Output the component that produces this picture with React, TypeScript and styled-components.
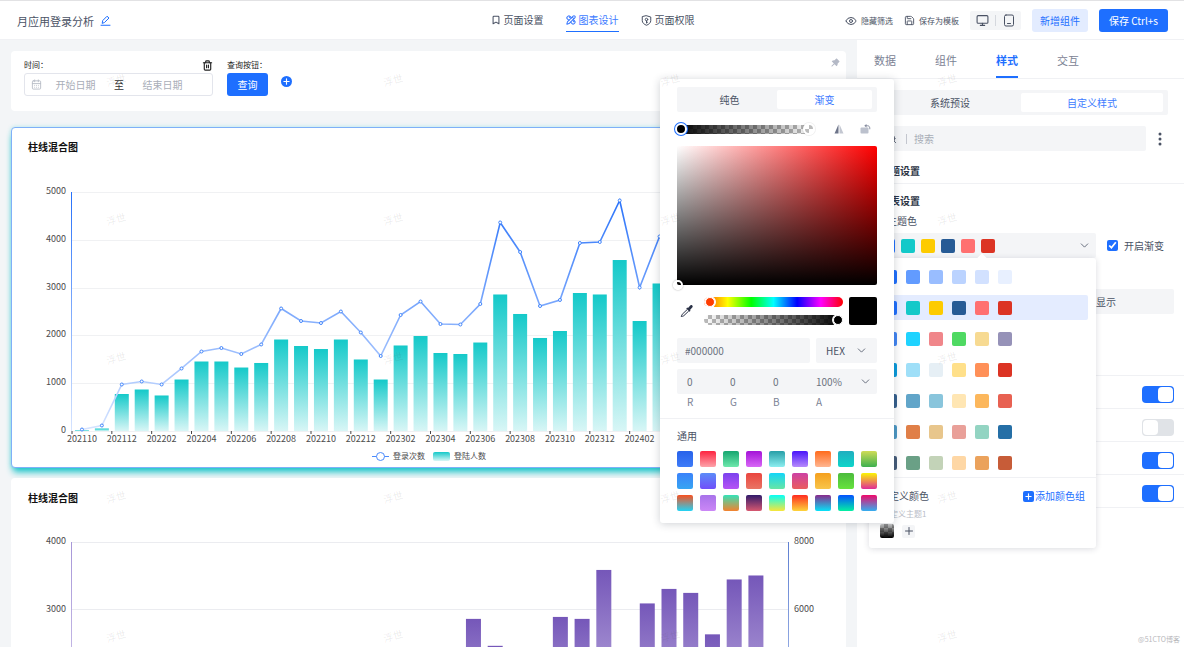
import React from "react";
import styled, { createGlobalStyle, css } from "styled-components";
import {
  Bookmark,
  CalendarDays,
  ChevronDown,
  Eye,
  Monitor,
  PencilRuler,
  Plus,
  Save,
  Search,
  Trash2,
} from "lucide-react";
import { AiFillPushpin } from "react-icons/ai";

const blue = "#1e6fff";
const ink = "#4a5264";
const soft = "#f4f5f7";
const line = "#f0f1f4";

const GlobalStyle = createGlobalStyle`
  * { box-sizing: border-box; }
  body {
    margin: 0;
    background: #f3f5f7;
    color: ${ink};
    font: 10px/16px "Noto Sans CJK SC", "Noto Sans", sans-serif;
  }
  button, input, select { font: inherit; color: inherit; }
  button { border: 0; padding: 0; background: none; cursor: pointer; }
  h1, h2, h3, p { margin: 0; font: inherit; }
  svg { display: block; flex: none; }
`;

const Page = styled.div`
  position: relative;
  display: flex;
  flex-direction: column;
  height: 100vh;
  overflow: hidden;
`;

/* ---------- header ---------- */
const Header = styled.header`
  display: grid;
  grid-template-columns: 1fr auto 1fr;
  align-items: center;
  height: 40px;
  flex: none;
  padding: 1px 16px 0 17px;
  background: #fff;
  border-top: 1px solid #e2e2e4;
  border-bottom: 1px solid ${line};
`;
const TitleBar = styled.div`
  display: flex;
  align-items: center;
  gap: 6px;
  font-size: 11px;
`;
const IconButton = styled.button<{ $color?: string }>`
  display: flex;
  align-items: center;
  justify-content: center;
  color: ${(p) => p.$color || ink};
`;
const Nav = styled.nav`
  display: flex;
  gap: 22px;
`;
const NavLink = styled.a<{ $active?: boolean }>`
  display: flex;
  align-items: center;
  gap: 3px;
  height: 22px;
  text-decoration: none;
  color: ${(p) => (p.$active ? "#3d7bff" : ink)};
  border-bottom: 1px solid ${(p) => (p.$active ? blue : "transparent")};
`;
const Actions = styled.div`
  display: flex;
  align-items: center;
  justify-content: flex-end;
  gap: 11px;
`;
const SmallAction = styled.button`
  display: flex;
  align-items: center;
  gap: 4px;
  font-size: 8px;
`;
const Devices = styled.div`
  display: flex;
  align-items: center;
  height: 19px;
  border-radius: 2px;
  background: ${soft};
  & > button { width: 25px; height: 19px; }
  & > span { width: 1px; height: 11px; background: #d5d8de; }
`;
const Button = styled.button<{ $primary?: boolean; $width: number }>`
  height: 23px;
  width: ${(p) => p.$width}px;
  border-radius: 3px;
  background: ${(p) => (p.$primary ? blue : "#e3ecff")};
  color: ${(p) => (p.$primary ? "#fff" : blue)};
`;

/* ---------- canvas ---------- */
const Body = styled.div`
  display: flex;
  flex: 1;
  min-height: 0;
`;
const Canvas = styled.main`
  flex: 1;
  min-width: 0;
  padding: 11px;
  overflow: hidden;
`;
const FilterCard = styled.section`
  display: flex;
  align-items: flex-start;
  height: 60px;
  margin-bottom: 16px;
  padding: 6px 5px 6px 13px;
  border-radius: 4px;
  background: #fff;
`;
const Field = styled.div`
  display: flex;
  flex-direction: column;
  margin-right: 14px;
`;
const FieldHead = styled.div`
  display: flex;
  align-items: center;
  justify-content: space-between;
  height: 16px;
  font-size: 8px;
  color: #222;
`;
const DateRange = styled.div`
  display: flex;
  align-items: center;
  width: 189px;
  height: 23px;
  padding-left: 6px;
  border: 1px solid #e3e5ec;
  border-radius: 3px;
  color: #b8bcc6;
  & > input {
    width: 67px;
    border: 0;
    padding: 0;
    background: none;
    text-align: center;
    outline: 0;
  }
  & > input::placeholder { color: #a9aeb8; }
  & > span { width: 20px; text-align: center; color: #333; }
`;
const AddFilter = styled.button`
  display: flex;
  align-items: center;
  justify-content: center;
  width: 11px;
  height: 11px;
  margin: 19px 0 0 -1px;
  border-radius: 50%;
  background: ${blue};
  color: #fff;
`;
const PinButton = styled(IconButton)`
  margin-left: auto;
`;
const ChartCard = styled.section<{ $active?: boolean }>`
  margin-bottom: 10px;
  border: 1px solid ${(p) => (p.$active ? "#7fb0f8" : "transparent")};
  border-radius: 4px;
  background: #fff;
  position: relative;
  ${(p) =>
    p.$active &&
    css`box-shadow: 0 6px 7px -2px #14c4c8, 0 0 4px rgba(20, 196, 200, 0.3);`}
  & > h2 {
    padding: 11px 16px 0;
    font-weight: 700;
    line-height: 16px;
    color: #111;
  }
  & > svg { width: 100%; height: auto; }
  & text { font-size: 9px; fill: #4c4c4c; }
  & text.legend { font-size: 8px; }
`;

/* ---------- sidebar ---------- */
const Sidebar = styled.aside`
  width: 327px;
  flex: none;
  background: #fff;
`;
const Tabs = styled.div`
  display: flex;
  gap: 39px;
  height: 39px;
  padding-left: 17px;
  border-bottom: 1px solid ${line};
`;
const Tab = styled.button<{ $active?: boolean }>`
  padding-top: 3px;
  font-size: 11px;
  color: ${(p) => (p.$active ? blue : "#7b8294")};
  font-weight: ${(p) => (p.$active ? 700 : 400)};
  border-bottom: 2px solid ${(p) => (p.$active ? blue : "transparent")};
`;
const Segmented = styled.div`
  display: grid;
  grid-template-columns: 1fr 1fr;
  height: 25px;
  padding: 3px 5px;
  border-radius: 2px;
  background: ${soft};
`;
const Segment = styled.button<{ $active?: boolean }>`
  border-radius: 2px;
  background: ${(p) => (p.$active ? "#fff" : "transparent")};
  color: ${(p) => (p.$active ? "#3d7bff" : ink)};
`;
const PanelTop = styled.div`
  display: flex;
  flex-direction: column;
  gap: 11px;
  padding: 11px 16px 0 17px;
`;
const SearchRow = styled.div`
  display: flex;
  align-items: center;
  justify-content: space-between;
  padding-right: 6px;
`;
const SearchBox = styled.label`
  display: flex;
  align-items: center;
  width: 272px;
  height: 25px;
  padding-left: 13px;
  border-radius: 2px;
  background: ${soft};
  & > input {
    flex: 1;
    min-width: 0;
    margin-left: 9px;
    padding: 0 0 0 7px;
    height: 10px;
    border: 0;
    border-left: 1px solid #c3c6ce;
    background: none;
    outline: 0;
  }
  & > input::placeholder { color: #a9aeb8; }
`;
const Section = styled.section<{ $first?: boolean }>`
  padding: ${(p) => (p.$first ? "12px 10px 4px 23px" : "9px 10px 0 23px")};
  ${(p) => p.$first && css`border-bottom: 1px solid ${line};`}
  & > h3 { font-weight: 700; color: #2c3444; }
  & > p { margin: 4px 0 4px 7px; }
`;
const ThemeRow = styled.div`
  display: flex;
  align-items: center;
  gap: 11px;
  margin-left: -6px;
`;
const ThemeSelect = styled.button`
  display: flex;
  align-items: center;
  gap: 6px;
  width: 222px;
  height: 25px;
  padding: 0 5px 0 7px;
  border-radius: 2px;
  background: ${soft};
  & > svg { margin-left: auto; }
`;
const Swatch = styled.span<{ $fill: string; $size?: number }>`
  display: block;
  flex: none;
  width: ${(p) => p.$size || 14}px;
  height: ${(p) => p.$size || 14}px;
  border-radius: 2px;
  background: ${(p) => p.$fill};
`;
const CheckLabel = styled.label`
  display: flex;
  align-items: center;
  gap: 6px;
  & > input {
    width: 11px;
    height: 11px;
    margin: 0;
    accent-color: ${blue};
  }
`;
const DisplaySelect = styled.select`
  display: block;
  width: 90px;
  height: 25px;
  margin: 31px 0 61px auto;
  padding: 0 12px;
  border: 0;
  border-radius: 2px;
  background: ${soft};
  appearance: none;
`;
const SwitchRow = styled.label`
  display: flex;
  align-items: center;
  justify-content: flex-end;
  height: 33px;
  padding: 4px 10px 0 0;
  border-top: 1px solid ${line};
`;
const SwitchList = styled.div`
  border-bottom: 1px solid ${line};
`;
const Switch = styled.input`
  display: flex;
  appearance: none;
  width: 32px;
  height: 17px;
  margin: 0;
  padding: 1px;
  border-radius: 4px;
  background: #e0e3e7;
  &::before {
    content: "";
    width: 15px;
    height: 15px;
    border-radius: 4px;
    background: #fff;
  }
  &:checked { background: ${blue}; justify-content: flex-end; }
`;

/* ---------- colour scheme menu ---------- */
const Menu = styled.div`
  position: absolute;
  top: 258px;
  right: 88px;
  width: 227px;
  padding: 6px 8px 10px;
  border-radius: 3px;
  background: #fff;
  box-shadow: 0 1px 6px rgba(30, 40, 60, 0.16);
`;
const MenuArrow = styled.i`
  position: absolute;
  top: -3px;
  right: 110px;
  width: 8px;
  height: 8px;
  background: #fff;
  transform: rotate(45deg);
`;
const SchemeList = styled.div`
  display: grid;
  gap: 6px;
  padding-bottom: 2px;
`;
const Scheme = styled.button<{ $active?: boolean }>`
  display: flex;
  align-items: center;
  gap: 9px;
  height: 25px;
  padding-left: 6px;
  border-radius: 2px;
  background: ${(p) => (p.$active ? "#e4ecff" : "transparent")};
`;
const CustomBlock = styled.div`
  margin: 0 -8px;
  padding: 10px 11px 0 10px;
  border-top: 1px solid ${line};
`;
const CustomHead = styled.div`
  display: flex;
  align-items: center;
  justify-content: space-between;
`;
const AddGroup = styled.button`
  display: flex;
  align-items: center;
  gap: 1px;
  color: ${blue};
  & > span {
    display: flex;
    align-items: center;
    justify-content: center;
    width: 11px;
    height: 11px;
    border-radius: 2px;
    background: ${blue};
    color: #fff;
  }
`;
const CustomName = styled.p`
  margin: 2px 0;
  padding-left: 3px;
  font-size: 8px;
  color: #b9bdc7;
`;
const CustomColors = styled.div`
  display: flex;
  align-items: center;
  gap: 8px;
  padding-left: 1px;
  & > button {
    display: flex;
    align-items: center;
    justify-content: center;
    width: 13px;
    height: 13px;
    border-radius: 2px;
    background: ${soft};
  }
`;

/* ---------- colour picker ---------- */
const Picker = styled.div`
  position: absolute;
  top: 79px;
  right: 290px;
  width: 234px;
  border-radius: 3px;
  background: #fff;
  box-shadow: 0 1px 8px rgba(30, 40, 60, 0.22);
`;
const PickerMain = styled.div`
  padding: 8px 17px;
  border-bottom: 1px solid ${line};
`;
const checker = "repeating-conic-gradient(#bbb 0 25%, #fff 0 50%) 0 0 / 8px 8px";
const StopRow = styled.div`
  display: flex;
  align-items: center;
  justify-content: space-between;
  height: 34px;
  padding-right: 6px;
`;
const StopTrack = styled.div`
  display: flex;
  align-items: center;
  justify-content: space-between;
  width: 136px;
  height: 9px;
  margin-right: 5px;
  border-radius: 5px;
  background: linear-gradient(90deg, #000, rgba(0, 0, 0, 0)), ${checker};
`;
const Stop = styled.button<{ $active?: boolean }>`
  width: 12px;
  height: 12px;
  margin: 0 -2px;
  border-radius: 50%;
  border: 2px solid #fff;
  background: ${(p) => (p.$active ? "#000" : checker)};
  box-shadow: 0 0 0 1px ${(p) => (p.$active ? blue : "rgba(0, 0, 0, 0.06)")};
`;
const Saturation = styled.div`
  display: flex;
  align-items: flex-end;
  height: 139px;
  border-radius: 2px;
  background: linear-gradient(0deg, #000, rgba(0, 0, 0, 0)),
    linear-gradient(90deg, #fff, #f00);
`;
const SaturationHandle = styled.button`
  width: 10px;
  height: 10px;
  margin: 0 0 -5px -4px;
  border: 2px solid #fff;
  border-radius: 50%;
  box-shadow: 0 0 2px rgba(0, 0, 0, 0.4);
`;
const SliderRow = styled.div`
  display: flex;
  align-items: center;
  gap: 6px;
  padding: 12px 0 13px 3px;
`;
const Sliders = styled.div`
  display: flex;
  flex-direction: column;
  justify-content: space-between;
  flex: 1;
  height: 28px;
  margin-left: 4px;
`;
const Slider = styled.input<{ $track: string; $thumb: string }>`
  appearance: none;
  width: 100%;
  height: 10px;
  margin: 0;
  border-radius: 5px;
  background: ${(p) => p.$track};
  &::-webkit-slider-thumb {
    appearance: none;
    width: 10px;
    height: 10px;
    border: 1px solid #fff;
    border-radius: 50%;
    background: ${(p) => p.$thumb};
    box-shadow: 0 0 0 1px #fff;
  }
`;
const HexRow = styled.div`
  display: flex;
  gap: 6px;
  margin-bottom: 6px;
`;
const HexInput = styled.input`
  flex: 1;
  min-width: 0;
  height: 25px;
  padding: 0 8px;
  border: 0;
  border-radius: 2px;
  background: ${soft};
  color: #6b7280;
`;
const SelectWrap = styled.label`
  display: grid;
  align-items: center;
  width: 61px;
  border-radius: 2px;
  background: ${soft};
  & > select, & > svg { grid-area: 1 / 1; }
  & > select {
    width: 100%;
    height: 25px;
    padding: 0 10px;
    border: 0;
    background: none;
    appearance: none;
  }
  & > svg { justify-self: end; margin-right: 9px; pointer-events: none; }
`;
const ChannelBox = styled.div`
  display: flex;
  align-items: center;
  height: 25px;
  padding: 0 7px 0 10px;
  border-radius: 2px;
  background: ${soft};
  color: #6b7280;
  & > input {
    width: 43px;
    padding: 0;
    border: 0;
    background: none;
  }
  & > svg { margin-left: auto; color: ${ink}; }
`;
const ChannelNames = styled.div`
  display: flex;
  padding-left: 10px;
  color: #7b8294;
  & > label { width: 43px; }
`;
const Presets = styled.div`
  padding: 9px 17px 12px;
`;
const PresetGrid = styled.div`
  display: grid;
  grid-template-columns: repeat(9, 16px);
  justify-content: space-between;
  row-gap: 6px;
  margin-top: 7px;
`;
const Preset = styled.button<{ $from: string; $to: string }>`
  height: 16px;
  border-radius: 2px;
  background: linear-gradient(${(p) => p.$from}, ${(p) => p.$to});
`;

/* ---------- watermarks ---------- */
const Watermarks = styled.div`
  position: absolute;
  inset: 10px 0 0 -23px;
  display: grid;
  grid-template-columns: repeat(auto-fill, 277px);
  grid-auto-rows: 139px;
  place-items: center;
  overflow: hidden;
  pointer-events: none;
  color: rgba(60, 60, 60, 0.1);
  & > span { transform: rotate(-15deg); }
`;
const Credit = styled.small`
  position: absolute;
  right: 4px;
  bottom: 0;
  font-size: 7px;
  color: #b8b8bc;
`;

const BARS = [
  20, 52, 774, 868, 743, 1077, 1454, 1454, 1328, 1423, 1914, 1778, 1715, 1914, 1496, 1077, 1789, 1987,
  1632, 1611, 1851, 2856, 2448, 1946, 2092, 2887, 2856, 3577, 2301, 3086, 2900, 2750, 2600, 2810, 3020, 2700,
];
const LINE = [
  31, 115, 973, 1036, 973, 1308, 1663, 1736, 1611, 1810, 2563, 2301, 2259, 2500, 2061, 1569, 2427, 2709,
  2238, 2228, 2657, 4362, 3745, 2615, 2741, 3933, 3954, 4822, 3002, 4069, 3900, 3700, 3500, 3820, 4100, 3600,
];
const BARS2 = [
  300, 420, 610, 700, 820, 900, 1010, 1200, 1150, 1300, 1500, 1420, 1610, 1700, 1800, 1650, 1900, 2100,
  2861, 2462, 2200, 2300, 2890, 2861, 3586, 2350, 3090, 3305, 3246, 2632, 3445, 3504, 2200,
];

const LEFT = 60;
const RIGHT = 777;
const TOP = 37;
const BOTTOM = 276;

const monthLabel = (i: number) => {
  const m = 9 + i;
  return `${2021 + Math.floor(m / 12)}${String((m % 12) + 1).padStart(2, "0")}`;
};

function LoginChart() {
  const step = (RIGHT - LEFT) / BARS.length;
  const x = (i: number) => LEFT + step * (i + 0.5);
  const y = (v: number) => BOTTOM - (v / 5000) * (BOTTOM - TOP);
  return (
    <svg viewBox="0 0 833 312" role="img" aria-label="柱线混合图">
      <defs>
        <linearGradient id="teal" x1="0" y1="0" x2="0" y2="1">
          <stop offset="0" stopColor="#14c9c9" />
          <stop offset="1" stopColor="#d8f6f6" />
        </linearGradient>
        <linearGradient id="blueLine" gradientUnits="userSpaceOnUse" x1="0" y1={TOP} x2="0" y2={BOTTOM}>
          <stop offset="0" stopColor="#2670fa" />
          <stop offset="1" stopColor="#d6e4ff" />
        </linearGradient>
      </defs>
      {[0, 1000, 2000, 3000, 4000, 5000].map((v) => (
        <g key={v}>
          <line x1={LEFT} x2={RIGHT} y1={Math.round(y(v)) + 0.5} y2={Math.round(y(v)) + 0.5} stroke="#f0f1f3" />
          <text x={LEFT - 6} y={y(v) + 2} textAnchor="end">{v}</text>
        </g>
      ))}
      <rect x={LEFT - 1} y={TOP} width="1" height={BOTTOM - TOP} fill="url(#blueLine)" />
      {BARS.map((v, i) => (
        <rect key={i} x={x(i) - 7} y={y(v)} width="14" height={BOTTOM - y(v)} fill="url(#teal)" />
      ))}
      {BARS.map((_, i) =>
        i % 2 === 0 ? (
          <g key={i}>
            <line x1={LEFT + step * i} x2={LEFT + step * i} y1={BOTTOM} y2={BOTTOM + 3} stroke="#444" />
            <text x={x(i)} y={BOTTOM + 11} textAnchor="middle">{monthLabel(i)}</text>
          </g>
        ) : null
      )}
      <polyline points={LINE.map((v, i) => `${x(i)},${y(v)}`).join(" ")} fill="none" stroke="url(#blueLine)" strokeWidth="1.6" />
      {LINE.map((v, i) => (
        <circle key={i} cx={x(i)} cy={y(v)} r="1.5" fill="#fff" stroke="#4285fb" />
      ))}
      <line x1="360" x2="377" y1="301.5" y2="301.5" stroke="#4c8bfb" />
      <circle cx="368.5" cy="301.5" r="4" fill="#fff" stroke="#4c8bfb" />
      <text className="legend" x="381" y="304">登录次数</text>
      <rect x="421" y="297" width="17" height="9" rx="2" fill="url(#teal)" />
      <text className="legend" x="442" y="304">登陆人数</text>
    </svg>
  );
}

function VisitChart() {
  const step = (RIGHT - LEFT) / BARS2.length;
  const top = 36;
  const bottom = 306;
  const y = (v: number) => bottom - (v / 4000) * (bottom - top);
  return (
    <svg viewBox="0 0 833 340" role="img" aria-label="柱线混合图">
      <defs>
        <linearGradient id="purple" x1="0" y1="0" x2="0" y2="1">
          <stop offset="0" stopColor="#7557b9" />
          <stop offset="1" stopColor="#efe9f9" />
        </linearGradient>
        <linearGradient id="purpleAxis" x1="0" y1="0" x2="0" y2="1">
          <stop offset="0" stopColor="#a797d8" />
          <stop offset="1" stopColor="#e9e3f6" />
        </linearGradient>
        <linearGradient id="blueAxis" x1="0" y1="0" x2="0" y2="1">
          <stop offset="0" stopColor="#5f80d2" />
          <stop offset="1" stopColor="#dbe4fa" />
        </linearGradient>
      </defs>
      {[0, 1000, 2000, 3000, 4000].map((v) => (
        <g key={v}>
          <line x1={LEFT} x2={RIGHT} y1={Math.floor(y(v)) + 0.5} y2={Math.floor(y(v)) + 0.5} stroke="#ebecf0" />
          <text x={LEFT - 6} y={y(v) + 2} textAnchor="end">{v}</text>
          <text x={RIGHT + 5} y={y(v) + 2}>{v * 2}</text>
        </g>
      ))}
      <rect x={LEFT - 1} y={top} width="1" height={bottom - top} fill="url(#purpleAxis)" />
      <rect x={RIGHT - 1} y={top} width="1" height={bottom - top} fill="url(#blueAxis)" />
      {BARS2.map((v, i) => (
        <rect key={i} x={LEFT + step * (i + 0.5) - 8} y={y(v)} width="15" height={bottom - y(v)} fill="url(#purple)" />
      ))}
    </svg>
  );
}

const SCHEMES = [
  ["#1e6fff", "#629bff", "#99bdff", "#bbd3ff", "#d2e1ff", "#e8f0ff"],
  ["#1e6fff", "#14c9c9", "#fdcb00", "#275b95", "#ff7070", "#dc3424"],
  ["#4285f4", "#1fd3ff", "#f0868a", "#4fd962", "#f7da92", "#9692b8"],
  ["#0a9bdc", "#9fdff8", "#e6eff5", "#ffe08a", "#ff9058", "#dc3424"],
  ["#355f8d", "#61a5c9", "#89c5dc", "#ffe6b3", "#fcb75c", "#e86152"],
  ["#4d98c5", "#e07f48", "#e8c68c", "#e9a099", "#93d4c2", "#256fa6"],
  ["#465c7a", "#6aa086", "#c3d3b8", "#fed7a5", "#eba25c", "#c75c38"],
];

const THEME = SCHEMES[1];

const PRESETS: [string, string][] = [
  ["#2862ea", "#3e7cf8"], ["#fd2441", "#fda3aa"], ["#16a670", "#6ee8ac"],
  ["#a413d8", "#d867f6"], ["#279fa8", "#8ceef0"], ["#4a16fa", "#b68afc"],
  ["#ff6b1c", "#ffb691"], ["#20aebf", "#0ed5ca"], ["#cfdc56", "#3db04f"],
  ["#3b82fa", "#36a5f2"], ["#5c8cf8", "#704ffa"], ["#7b42ee", "#b653f5"],
  ["#ea453f", "#e97565"], ["#13d6f8", "#67e6a5"], ["#cd41a4", "#ea5e5e"],
  ["#f5a01e", "#f8c54a"], ["#4cbb3d", "#66e33e"], ["#fbf604", "#e02b98"],
  ["#f9501f", "#22d3f5"], ["#a873ea", "#cb87f6"], ["#34e2b8", "#f4822e"],
  ["#311b6b", "#d75870"], ["#06fff6", "#f8e63a"], ["#ff2b20", "#fdd43a"],
  ["#882a8c", "#06e2f8"], ["#0452ff", "#04f0a2"], ["#f0086a", "#34aef0"],
];

const svgProps = { fill: "none", stroke: "currentColor", strokeLinecap: "round", strokeLinejoin: "round" } as const;

const EditIcon = () => (
  <svg width="11" height="11" viewBox="0 0 22 22" {...svgProps} strokeWidth="2">
    <path d="M4.5 16l1-5L14 2.5l4 3.500-8.500 8.500z M2 20.500h18" />
  </svg>
);
const ShieldIcon = () => (
  <svg width="11" height="11" viewBox="0 0 22 22" {...svgProps} strokeWidth="2">
    <path d="M11 1.500l8.500 2.500v7.500c0 4-4 7.500-8.500 9-4.500-1.500-8.500-5-8.500-9V4z" />
    <circle cx="11" cy="9" r="2.500" />
    <path d="M11 12v4M11 14.500h2" />
  </svg>
);
const TabletIcon = () => (
  <svg width="12" height="13" viewBox="0 0 24 26" {...svgProps} strokeWidth="2">
    <rect x="3" y="2" width="18" height="22" rx="3" />
    <path d="M9 19h6" />
  </svg>
);
const MirrorIcon = () => (
  <svg width="10" height="10" viewBox="0 0 20 20">
    <path d="M9 1v18H1z" fill="#6d7489" />
    <path d="M11 1v18h8z" fill="#c3c7d1" />
  </svg>
);
const RotateIcon = () => (
  <svg width="11" height="10" viewBox="0 0 22 20">
    <rect x="1" y="7" width="16" height="12" rx="2" fill="#bcc1cd" />
    <path d="M11 3.500h4c3 0 4.500 2 4.500 5v2" fill="none" stroke="#858b9e" strokeWidth="2" />
    <path d="M13 0v7L8.500 3.500z" fill="#858b9e" />
  </svg>
);
const DropperIcon = () => (
  <svg width="14" height="14" viewBox="0 0 28 28">
    <path d="M16 8l4-4.500c1-1.500 3-2 4.500-.5s1 3.500-.5 4.500L20 12l1 1.500-2 2L12.500 9l2-2z" fill="#2a3146" />
    <path d="M14.500 11L4.500 20.500c-1 1-1 2.500-2 4.500 2-.5 4-.5 5-1.500L17.500 14" fill="none" stroke="#2a3146" strokeWidth="2" strokeLinejoin="round" />
  </svg>
);
const DotsIcon = () => (
  <svg width="4" height="14" viewBox="0 0 4 14" fill="#4a5264">
    <circle cx="2" cy="2" r="1.500" />
    <circle cx="2" cy="7" r="1.500" />
    <circle cx="2" cy="12" r="1.500" />
  </svg>
);

function ColorPicker() {
  return (
    <Picker role="dialog" aria-label="颜色选择">
      <PickerMain>
        <Segmented>
          <Segment>纯色</Segment>
          <Segment $active>渐变</Segment>
        </Segmented>
        <StopRow>
          <StopTrack>
            <Stop $active aria-label="起始色" />
            <Stop aria-label="结束色" />
          </StopTrack>
          <IconButton aria-label="翻转"><MirrorIcon /></IconButton>
          <IconButton aria-label="旋转"><RotateIcon /></IconButton>
        </StopRow>
        <Saturation>
          <SaturationHandle aria-label="饱和度" />
        </Saturation>
        <SliderRow>
          <IconButton aria-label="取色"><DropperIcon /></IconButton>
          <Sliders>
            <Slider
              type="range"
              aria-label="色相"
              defaultValue={1}
              $track="linear-gradient(90deg, #ff4400, #ff0 17%, #0f0 34%, #0ff 50%, #00f 67%, #f0f 84%, #f00)"
              $thumb="#ff3d00"
            />
            <Slider
              type="range"
              aria-label="透明度"
              defaultValue={100}
              $track={`linear-gradient(90deg, rgba(0, 0, 0, 0), #000), ${checker}`}
              $thumb="#000"
            />
          </Sliders>
          <Swatch $fill="#000" $size={28} />
        </SliderRow>
        <HexRow>
          <HexInput aria-label="色值" defaultValue="#000000" />
          <SelectWrap>
            <select aria-label="格式" defaultValue="HEX">
              <option>HEX</option>
              <option>RGB</option>
            </select>
            <ChevronDown size={13} strokeWidth={1.5} />
          </SelectWrap>
        </HexRow>
        <ChannelBox>
          <input id="ch-r" defaultValue="0" />
          <input id="ch-g" defaultValue="0" />
          <input id="ch-b" defaultValue="0" />
          <input id="ch-a" defaultValue="100%" />
          <ChevronDown size={13} strokeWidth={1.5} />
        </ChannelBox>
        <ChannelNames>
          <label htmlFor="ch-r">R</label>
          <label htmlFor="ch-g">G</label>
          <label htmlFor="ch-b">B</label>
          <label htmlFor="ch-a">A</label>
        </ChannelNames>
      </PickerMain>
      <Presets>
        <p>通用</p>
        <PresetGrid>
          {PRESETS.map(([from, to]) => (
            <Preset key={from} $from={from} $to={to} aria-label={`${from} ${to}`} />
          ))}
        </PresetGrid>
      </Presets>
    </Picker>
  );
}

function SchemeMenu() {
  return (
    <Menu>
      <MenuArrow />
      <SchemeList>
        {SCHEMES.map((colors, i) => (
          <Scheme key={i} $active={i === 1} aria-label={`配色 ${i + 1}`}>
            {colors.map((c) => <Swatch key={c} $fill={c} />)}
          </Scheme>
        ))}
      </SchemeList>
      <CustomBlock>
        <CustomHead>
          自定义颜色
          <AddGroup><span><Plus size={9} strokeWidth={3} /></span>添加颜色组</AddGroup>
        </CustomHead>
        <CustomName>自定义主题1</CustomName>
        <CustomColors>
          <Swatch $fill={`linear-gradient(rgba(0, 0, 0, 0.2), #000), ${checker}`} />
          <button aria-label="添加颜色"><Plus size={12} strokeWidth={2} /></button>
        </CustomColors>
      </CustomBlock>
    </Menu>
  );
}

export default function App() {
  return (
    <Page lang="zh-CN">
      <GlobalStyle />
      <Header>
        <TitleBar>
          <h1>月应用登录分析</h1>
          <IconButton $color={blue} aria-label="编辑名称"><EditIcon /></IconButton>
        </TitleBar>
        <Nav>
          <NavLink href="#settings"><Bookmark size={10} strokeWidth={2.5} />页面设置</NavLink>
          <NavLink href="#design" $active><PencilRuler size={10} strokeWidth={2.5} />图表设计</NavLink>
          <NavLink href="#access"><ShieldIcon />页面权限</NavLink>
        </Nav>
        <Actions>
          <SmallAction><Eye size={12} />隐藏筛选</SmallAction>
          <SmallAction><Save size={11} />保存为模板</SmallAction>
          <Devices>
            <IconButton aria-label="电脑"><Monitor size={13} /></IconButton>
            <span />
            <IconButton aria-label="平板"><TabletIcon /></IconButton>
          </Devices>
          <Button $width={56}>新增组件</Button>
          <Button $width={69} $primary>保存 Ctrl+s</Button>
        </Actions>
      </Header>

      <Body>
        <Canvas>
          <FilterCard>
            <Field>
              <FieldHead>
                <label htmlFor="date-start">时间：</label>
                <IconButton $color="#222" aria-label="删除"><Trash2 size={11} strokeWidth={2.5} /></IconButton>
              </FieldHead>
              <DateRange>
                <CalendarDays size={11} />
                <input id="date-start" placeholder="开始日期" />
                <span>至</span>
                <input aria-label="结束日期" placeholder="结束日期" />
              </DateRange>
            </Field>
            <Field>
              <FieldHead>查询按钮：</FieldHead>
              <Button $width={41} $primary>查询</Button>
            </Field>
            <AddFilter aria-label="添加筛选"><Plus size={9} strokeWidth={3} /></AddFilter>
            <PinButton $color="#b4b9c6" aria-label="固定"><AiFillPushpin size={11} /></PinButton>
          </FilterCard>
          <ChartCard $active>
            <h2>柱线混合图</h2>
            <LoginChart />
          </ChartCard>
          <ChartCard>
            <h2>柱线混合图</h2>
            <VisitChart />
          </ChartCard>
        </Canvas>

        <Sidebar>
          <Tabs>
            <Tab>数据</Tab>
            <Tab>组件</Tab>
            <Tab $active>样式</Tab>
            <Tab>交互</Tab>
          </Tabs>
          <PanelTop>
            <Segmented>
              <Segment>系统预设</Segment>
              <Segment $active>自定义样式</Segment>
            </Segmented>
            <SearchRow>
              <SearchBox>
                <Search size={10} />
                <input aria-label="搜索" placeholder="搜索" />
              </SearchBox>
              <IconButton aria-label="更多"><DotsIcon /></IconButton>
            </SearchRow>
          </PanelTop>
          <Section $first>
            <h3>标题设置</h3>
          </Section>
          <Section>
            <h3>图表设置</h3>
            <p>主题色</p>
            <ThemeRow>
              <ThemeSelect aria-label="主题色">
                {THEME.map((c) => <Swatch key={c} $fill={c} />)}
                <ChevronDown size={13} strokeWidth={1.5} />
              </ThemeSelect>
              <CheckLabel>
                <input type="checkbox" defaultChecked />
                开启渐变
              </CheckLabel>
            </ThemeRow>
            <DisplaySelect aria-label="显示方式">
              <option>显示</option>
            </DisplaySelect>
          </Section>
          <SwitchList>
            {[true, false, true, true].map((on, i) => (
              <SwitchRow key={i}>
                <Switch type="checkbox" role="switch" defaultChecked={on} aria-label={`开关 ${i + 1}`} />
              </SwitchRow>
            ))}
          </SwitchList>
        </Sidebar>
      </Body>

      <SchemeMenu />
      <ColorPicker />
      <Watermarks aria-hidden="true">
        {Array.from({ length: 20 }, (_, i) => <span key={i}>浮世</span>)}
      </Watermarks>
      <Credit>@51CTO博客</Credit>
    </Page>
  );
}
